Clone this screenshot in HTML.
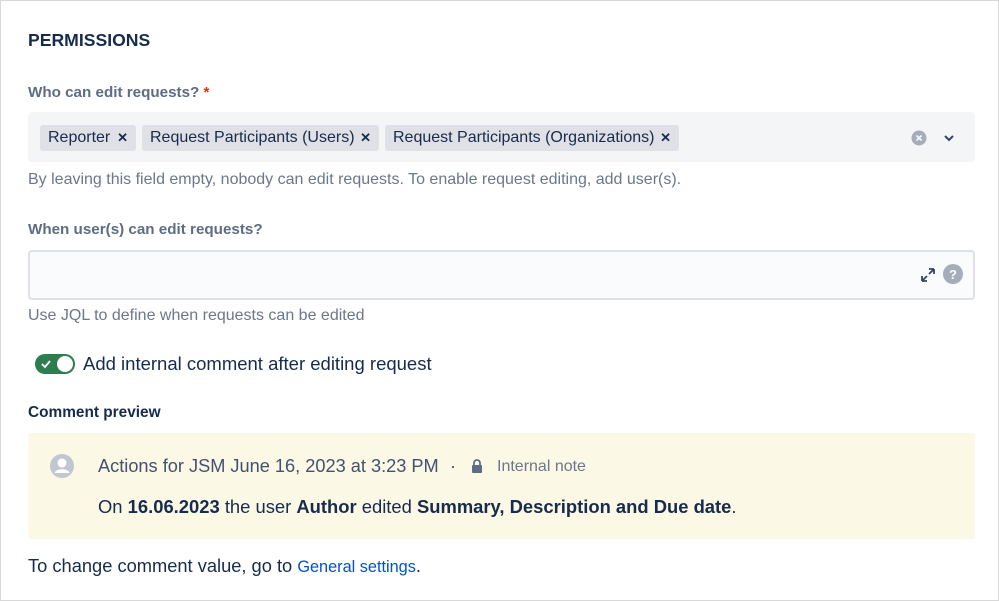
<!DOCTYPE html><html><head><style>
body{margin:0;width:999px;height:601px;background:#fff;font-family:"Liberation Sans",sans-serif;color:#172B4D;position:relative;overflow:hidden}
.frame{position:absolute;left:0;top:0;width:997px;height:599px;border:1px solid #D8D8D8}
.a{position:absolute;white-space:nowrap}
.lbl{font-size:15.2px;font-weight:bold;color:#5E6C84}
.help{font-size:16px;color:#6B778C}
.tag{position:absolute;top:125px;height:26px;background:#DFE1E6;border-radius:3px;font-size:16px;line-height:26px;padding-left:8px;color:#172B4D;box-sizing:border-box}
.tag b{position:absolute;right:8px;font-size:13px}
</style></head><body><div class="frame"></div>
<div class="a" style="left:28px;top:30px;font-size:17.6px;font-weight:bold">PERMISSIONS</div>
<div class="a lbl" style="left:28px;top:84px">Who can edit requests? <span style="color:#DE350B">*</span></div>
<div class="a" style="left:28px;top:112px;width:947px;height:50px;background:#F4F5F7;border-radius:4px"></div>
<div class="tag" style="left:40px;width:96px">Reporter<b>✕</b></div>
<div class="tag" style="left:142px;width:237px">Request Participants (Users)<b>✕</b></div>
<div class="tag" style="left:385px;width:294px">Request Participants (Organizations)<b>✕</b></div>
<svg class="a" style="left:911px;top:130px" width="16" height="16"><circle cx="8" cy="8" r="7.5" fill="#A5ADBA"/><path d="M5.5 5.5l5 5M10.5 5.5l-5 5" stroke="#F4F5F7" stroke-width="1.8"/></svg>
<svg class="a" style="left:943px;top:133px" width="12" height="10"><path d="M2 3l4 4 4-4" stroke="#344563" stroke-width="2" fill="none"/></svg>
<div class="a help" style="left:28px;top:171px">By leaving this field empty, nobody can edit requests. To enable request editing, add user(s).</div>
<div class="a lbl" style="left:28px;top:221px">When user(s) can edit requests?</div>
<div class="a" style="left:28px;top:250px;width:943px;height:46px;border:2px solid #DFE1E6;background:#FAFBFC;border-radius:4px"></div>
<svg class="a" style="left:920px;top:267px" width="16" height="16"><path d="M2 14l5-5M9 7l5-5M2 14v-5M2 14h5M14 2h-5M14 2v5" stroke="#344563" stroke-width="1.8" fill="none"/></svg>
<svg class="a" style="left:943px;top:264px" width="20" height="20"><circle cx="10" cy="10" r="10" fill="#A5ADBA"/><text x="10" y="15" font-size="13" font-weight="bold" fill="#fff" text-anchor="middle" font-family="Liberation Sans">?</text></svg>
<div class="a help" style="left:28px;top:307px">Use JQL to define when requests can be edited</div>
<div class="a" style="left:35px;top:354px;width:40px;height:20px;background:#2E7D4F;border-radius:10px"></div>
<div class="a" style="left:57px;top:356px;width:16px;height:16px;background:#fff;border-radius:50%"></div>
<svg class="a" style="left:40px;top:358px" width="12" height="12"><path d="M2 6l3 3 5-6" stroke="#fff" stroke-width="1.8" fill="none"/></svg>
<div class="a" style="left:83px;top:353px;font-size:18.5px">Add internal comment after editing request</div>
<div class="a" style="left:28px;top:404px;font-size:15.4px;font-weight:bold">Comment preview</div>
<div class="a" style="left:28px;top:433px;width:947px;height:106px;background:#FCF8E6;border-radius:3px"></div>
<svg class="a" style="left:50px;top:454px" width="24" height="24"><circle cx="12" cy="12" r="12" fill="#C1C7D0"/><circle cx="12" cy="9" r="4.5" fill="#fff"/><path d="M4.5 19c1.5-5 13.5-5 15 0" fill="#fff"/></svg>
<div class="a" style="left:98px;top:456px;font-size:18.2px;color:#42526E">Actions for JSM June 16, 2023 at 3:23 PM</div>
<div class="a" style="left:450px;top:456px;font-size:18px;color:#42526E">·</div>
<svg class="a" style="left:471px;top:459px" width="12" height="14"><rect x="1" y="6" width="10" height="8" rx="1" fill="#5E6C84"/><path d="M3 6V4a3 3 0 0 1 6 0v2" stroke="#5E6C84" stroke-width="1.8" fill="none"/></svg>
<div class="a" style="left:497px;top:458px;font-size:16px;color:#6B778C">Internal note</div>
<div class="a" style="left:98px;top:496px;font-size:18.4px">On <b>16.06.2023</b> the user <b>Author</b> edited <b>Summary, Description and Due date</b>.</div>
<div class="a" style="left:28px;top:555px;font-size:18.3px">To change comment value, go to <span style="color:#0052CC;font-size:16.3px">General settings</span>.</div>
</body></html>
